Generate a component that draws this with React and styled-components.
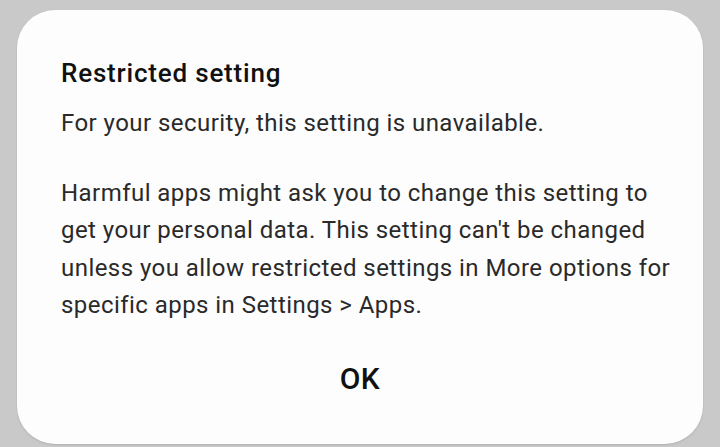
import styled, { createGlobalStyle } from "styled-components";

const GlobalStyle = createGlobalStyle`
  html, body {
    margin: 0;
    padding: 0;
    background: #c9c9c9;
  }
  * {
    box-sizing: border-box;
  }
`;

export default function App() {
  return (
    <>
      <GlobalStyle />
      <Screen>
        <Dialog>
          <Title>Restricted setting</Title>
          <Message>For your security, this setting is unavailable.</Message>
          <Message spaced>
            Harmful apps might ask you to change this setting to
            <br />
            get your personal data. This setting can't be changed
            <br />
            unless you allow restricted settings in More options for
            <br />
            specific apps in Settings &gt; Apps.
          </Message>
          <Actions>
            <OkButton>OK</OkButton>
          </Actions>
        </Dialog>
      </Screen>
    </>
  );
}

const Screen = styled.div`
  width: 720px;
  height: 447px;
  padding: 10px 17px 3px 17px;
  background: #c9c9c9;
  font-family: Roboto, "Noto Sans", sans-serif;
`;

const Dialog = styled.div`
  height: 434px;
  background: #fdfdfd;
  border-radius: 38px;
  box-shadow: 0 1px 2px rgba(0, 0, 0, 0.12);
  padding: 46px 44px 0 44px;
  display: flex;
  flex-direction: column;
`;

const Title = styled.div`
  font-size: 26px;
  font-weight: 500;
  letter-spacing: 0.8px;
  color: #111;
  line-height: 34px;
  margin-bottom: 15px;
`;

const Message = styled.p`
  margin: 0;
  margin-top: ${(p) => (p.spaced ? "32px" : "0")};
  font-size: 24px;
  letter-spacing: 0.45px;
  line-height: 37.5px;
  color: #2a2a2a;
  white-space: nowrap;
`;

const Actions = styled.div`
  display: flex;
  justify-content: center;
  margin-top: 36px;
`;

const OkButton = styled.button`
  border: none;
  background: none;
  padding: 0;
  font-family: inherit;
  font-size: 30px;
  font-weight: 500;
  letter-spacing: 0.5px;
  color: #111;
  line-height: 36px;
`;
